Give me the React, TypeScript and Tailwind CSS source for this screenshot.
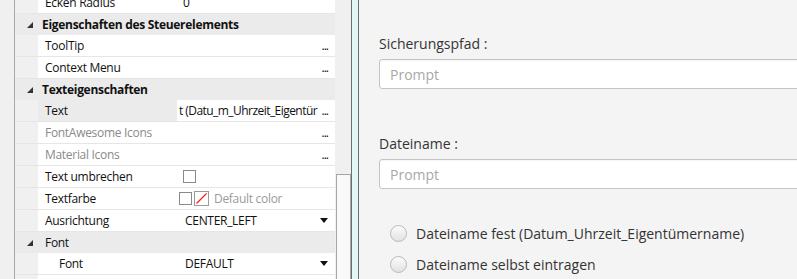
import React from 'react';

type Row =
  | { kind: 'header'; label: string; bold?: boolean }
  | { kind: 'prop'; label: string; value?: React.ReactNode; muted?: boolean; selected?: boolean; indent?: boolean };

const FONT = { fontFamily: '"Open Sans", "Noto Sans", sans-serif' };

function Dots() {
  return <span className="ml-auto shrink-0 pr-[7px] text-[12px] leading-none tracking-[-1px]">...</span>;
}

function DropArrow() {
  return (
    <svg className="ml-auto mr-[7px]" width="8" height="5" viewBox="0 0 8 5">
      <polygon points="0,0 8,0 4,5" fill="#111" />
    </svg>
  );
}

function Expander() {
  return (
    <svg width="6" height="6" viewBox="0 0 6 6">
      <polygon points="6,0 6,6 0,6" fill="#333" />
    </svg>
  );
}

function CheckBox() {
  return <span className="block h-[13px] w-[13px] border border-[#8a8a8a] bg-white" />;
}

function ColorSwatch() {
  return (
    <span className="relative block h-[15px] w-[15px] border border-[#9a9a9a] bg-white">
      <svg className="absolute inset-0" width="13" height="13" viewBox="0 0 13 13">
        <line x1="1.5" y1="11.5" x2="11.5" y2="1.5" stroke="#ff1a1a" strokeWidth="1.3" />
      </svg>
    </span>
  );
}

const rows: Row[] = [
  { kind: 'prop', label: 'Ecken Radius', value: <span className="ml-[4px]">0</span> },
  { kind: 'header', label: 'Eigenschaften des Steuerelements', bold: true },
  { kind: 'prop', label: 'ToolTip', value: <Dots /> },
  { kind: 'prop', label: 'Context Menu', value: <Dots /> },
  { kind: 'header', label: 'Texteigenschaften', bold: true },
  {
    kind: 'prop',
    label: 'Text',
    selected: true,
    value: (
      <>
        <span className="min-w-0 whitespace-nowrap tracking-[-0.55px]">t (Datu_m_Uhrzeit_Eigentür</span>
        <Dots />
      </>
    ),
  },
  { kind: 'prop', label: 'FontAwesome Icons', muted: true, value: <Dots /> },
  { kind: 'prop', label: 'Material Icons', muted: true, value: <Dots /> },
  { kind: 'prop', label: 'Text umbrechen', value: <span className="ml-[4px]"><CheckBox /></span> },
  {
    kind: 'prop',
    label: 'Textfarbe',
    value: (
      <span className="flex items-center gap-[2px]">
        <CheckBox />
        <ColorSwatch />
        <span className="ml-[3px] text-[#9a9a9a]">Default color</span>
      </span>
    ),
  },
  {
    kind: 'prop',
    label: 'Ausrichtung',
    value: (
      <>
        <span className="ml-[6px]">CENTER_LEFT</span>
        <DropArrow />
      </>
    ),
  },
  { kind: 'header', label: 'Font' },
  {
    kind: 'prop',
    label: 'Font',
    indent: true,
    value: (
      <>
        <span className="ml-[6px]">DEFAULT</span>
        <DropArrow />
      </>
    ),
  },
  { kind: 'prop', label: '' },
];

function PropertyGrid() {
  return (
    <div className="-mt-[8px] flex flex-col text-[12px] tracking-[-0.3px] text-[#111]">
      {rows.map((row, i) =>
        row.kind === 'header' ? (
          <div key={i} className="flex h-[21px] items-center bg-[#ebebeb]">
            <div className="flex w-[23px] items-center justify-end pr-[5px]">
              <Expander />
            </div>
            <span className={row.bold ? 'ml-[4px] font-bold' : 'ml-[7px]'}>{row.label}</span>
          </div>
        ) : (
          <div key={i} className="flex h-[22px] border-b border-[#e6e6e6]">
            <div className="w-[23px] bg-[#f0f0f0]" />
            <div
              className={`flex w-[139px] items-center ${row.selected ? 'bg-[#ebebeb]' : 'bg-white'} ${
                row.indent ? 'pl-[21px]' : 'pl-[7px]'
              } ${row.muted ? 'text-[#8a8a8a]' : ''}`}
            >
              {row.label}
            </div>
            <div className="flex min-w-0 flex-1 items-center gap-[3px] overflow-hidden bg-white pl-[2px]">
              {row.value}
            </div>
          </div>
        )
      )}
    </div>
  );
}

function TextField() {
  return (
    <div className="flex h-[30px] w-[440px] items-center rounded-[3px] border border-[#c4c4c4] bg-white pl-[10px] text-[14px] text-[#a8a8a8] shadow-[inset_0_1px_1px_rgba(0,0,0,0.04)]">
      Prompt
    </div>
  );
}

function Radio({ label }: { label: string }) {
  return (
    <div className="flex h-[24px] items-center">
      <span className="h-[17px] w-[17px] rounded-full border border-[#b9b9b9] bg-gradient-to-b from-[#fbfbfb] to-[#e2e2e2]" />
      <span className="ml-[9px] text-[14px] text-[#333]">{label}</span>
    </div>
  );
}

export default function App() {
  return (
    <div className="flex h-[279px] w-[797px] overflow-hidden bg-[#f4f4f4]" style={FONT}>
      <div className="w-[15px] border-r border-[#a9a9a9] bg-[#f0f0f0]" />
      <div className="w-[320px] overflow-hidden bg-[#f0f0f0]">
        <PropertyGrid />
      </div>
      {/* scrollbar */}
      <div className="flex w-[16px] flex-col bg-[#f0f0f0] pl-[1px]">
        <div className="mt-[174px] flex-1 border border-b-0 border-[#a5a5a5] bg-[#f9f9f9]" />
      </div>
      {/* split divider */}
      <div className="w-[8px] border-x border-[#6e6e6e] bg-[#e4f7f7]" />
      <div className="flex min-w-0 flex-1 flex-col pl-[20px] pt-[34px] text-[#333]">
        <div className="text-[14px] leading-[20px]">Sicherungspfad :</div>
        <div className="mt-[5px]">
          <TextField />
        </div>
        <div className="mt-[45px] text-[14px] leading-[20px]">Dateiname :</div>
        <div className="mt-[5px]">
          <TextField />
        </div>
        <div className="ml-[11px] mt-[32px] flex flex-col gap-[7px]">
          <Radio label="Dateiname fest (Datum_Uhrzeit_Eigentümername)" />
          <Radio label="Dateiname selbst eintragen" />
        </div>
      </div>
    </div>
  );
}
